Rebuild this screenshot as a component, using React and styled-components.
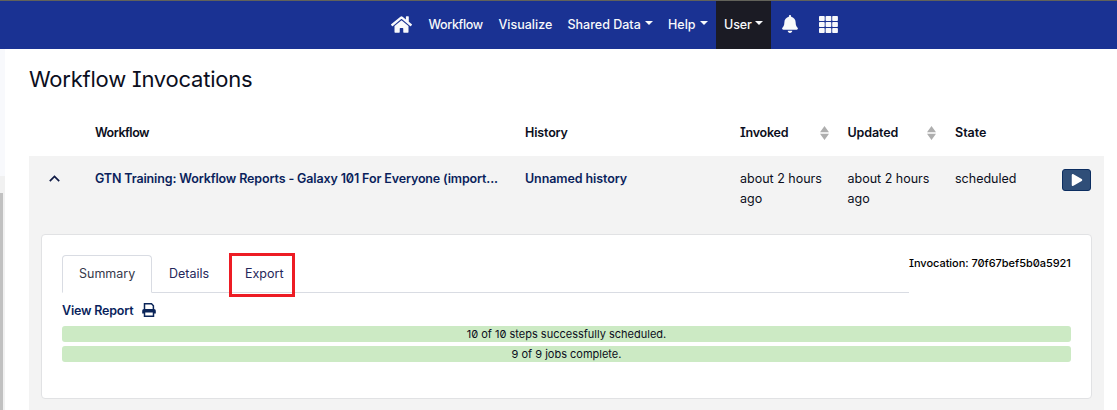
import React from "react";
import styled, { createGlobalStyle } from "styled-components";
import { FaHome, FaBell, FaPlay } from "react-icons/fa";

const GlobalStyle = createGlobalStyle`
  *, *::before, *::after { box-sizing: border-box; }
  body {
    margin: 0;
    background: #fff;
    color: #0b0e20;
    font: 400 12.5px/20px Inter, "Liberation Sans", sans-serif;
    font-feature-settings: "zero" 1, "cv08" 1;
    overflow: hidden;
  }
  a { color: inherit; text-decoration: none; }
`;

const Page = styled.div`
  display: flex;
  flex-direction: column;
  height: 410px;
`;

const Navbar = styled.nav`
  display: flex;
  height: 49px;
  padding-left: 391px;
  background: #1a3293;
  border-top: 1px solid #62625a;
  color: #f8f9fb;
`;

const NavItem = styled.a`
  display: flex;
  align-items: center;
  width: ${(p) => p.$width}px;
  padding: 0 0 ${(p) => (p.$icon ? 2 : 0)}px ${(p) => p.$pad || 0}px;
  background: ${(p) => (p.$active ? "#1b1b24" : "transparent")};
  font-weight: 500;
  white-space: nowrap;
  letter-spacing: ${(p) => p.$track || 0}px;
`;

const NavLabel = styled.span`
  width: ${(p) => p.$width}px;
`;

const Caret = styled.i`
  margin: -4px 0 0 4px;
  border: 4px solid transparent;
  border-top-color: currentColor;
  border-bottom: 0;
`;

const Body = styled.div`
  display: flex;
  flex: 1;
  min-height: 0;
`;

const SideStrip = styled.aside`
  display: flex;
  flex-direction: column;
  width: 5px;
  background: #f8f9fc;
`;

const Scrollbar = styled.div`
  flex: 1;
  margin-top: 127px;
  padding-top: 17px;
  background: #f1f1f1;
`;

const Thumb = styled.div`
  width: 3px;
  height: 100%;
  background: #c1c1c1;
`;

const Main = styled.main`
  display: flex;
  flex-direction: column;
  flex: 1;
  padding: 15px 13px 0 24px;
`;

const Title = styled.h1`
  margin: 0 0 29px;
  font-size: 22px;
  line-height: 30px;
  font-weight: 400;
  letter-spacing: -0.22px;
`;

const Row = styled.div`
  display: grid;
  grid-template-columns: 66px 430px 215px 107.5px 107.5px 107px 1fr;
`;

const HeadRow = styled(Row)`
  height: 33px;
  font-weight: 600;
`;

const Cell = styled.div`
  padding-right: 17px;
  letter-spacing: ${(p) => p.$track || 0}px;
`;

const SortCell = styled(Cell)`
  display: flex;
  justify-content: space-between;
  padding-right: 19px;
  svg { margin-top: 3px; }
`;

const Invocation = styled.section`
  flex: 1;
  padding: 13px 12px 0;
  background: #f3f3f3;
`;

const DataRow = styled(Row)`
  height: 65px;
  margin: 0 -12px;
`;

const ToggleCell = styled.div`
  padding: 6px 0 0 20px;
  svg { display: block; }
`;

const LinkCell = styled.a`
  color: #0a1f5c;
  font-weight: 600;
  white-space: nowrap;
  letter-spacing: ${(p) => p.$track || 0}px;
`;

const RunButton = styled.button`
  display: flex;
  align-items: center;
  justify-content: center;
  width: 29px;
  height: 22px;
  padding: 0;
  border: 1px solid #0b2d60;
  border-radius: 3px;
  background: #2f4e78;
  color: #fff;
`;

const Card = styled.div`
  height: 165px;
  padding: 20px;
  border: 1px solid #e1e2e4;
  border-radius: 4px;
  background: #fff;
`;

const CardTop = styled.div`
  display: flex;
  height: 38px;
`;

const Tabs = styled.div`
  display: flex;
  flex: 1;
  border-bottom: 1px solid #d9dce3;
`;

const Tab = styled.a`
  position: relative;
  width: ${(p) => p.$width}px;
  height: 38px;
  padding: 8px 0 0 ${(p) => p.$pad}px;
  border: 1px solid ${(p) => (p.$active ? "#d9dce3" : "transparent")};
  border-bottom-color: ${(p) => (p.$active ? "#fff" : "transparent")};
  border-radius: 4px 4px 0 0;
  color: ${(p) => (p.$active ? "#35394b" : "#25265a")};
`;

const Highlight = styled.span`
  position: absolute;
  inset: -3px auto auto -1px;
  width: 66px;
  height: 44px;
  border: 3px solid #ed1c24;
`;

const InvocationId = styled.div`
  width: 162px;
  font-size: 11px;
  line-height: 17px;
  font-weight: 500;
  white-space: nowrap;
  color: #000;
  letter-spacing: -0.04px;
`;

const ReportLink = styled.a`
  display: flex;
  align-items: center;
  height: 20px;
  margin: 7px 0 6px;
  color: #0a1f5c;
  font-weight: 600;
  letter-spacing: -0.2px;
`;

const ReportLabel = styled.span`
  width: 80px;
  padding-top: 1px;
`;

const Progress = styled.div`
  height: 16px;
  margin-bottom: 4px;
  border-radius: 3px;
  background: #cceac4;
  font-size: 11px;
  line-height: 16px;
  text-align: center;
`;

const SortIcon = () => (
  <svg width="9" height="14" viewBox="0 0 9 14" fill="#aeaeae">
    <path d="M4.5 0 9 6.2H0zM4.5 14 0 7.8h9z" />
  </svg>
);

const ChevronUp = () => (
  <svg width="11" height="7" viewBox="0 0 11 7" fill="none" stroke="#0f1a45" strokeWidth="1.7">
    <path d="M.8 6.2 5.5 1.5l4.7 4.7" />
  </svg>
);

const GridIcon = () => (
  <svg width="19" height="17" viewBox="0 0 19 17" fill="currentColor">
    {[0, 6, 12].map((y) =>
      [0, 6.6, 13.2].map((x) => (
        <rect key={`${x}-${y}`} x={x} y={y} width="5.7" height="5" rx="0.8" />
      ))
    )}
  </svg>
);

const PrintIcon = () => (
  <svg width="14" height="14" viewBox="0 0 14 14" fill="none" stroke="#0a2458" strokeWidth="1.5">
    <path d="M2.5 6.5V.8h7l1.9 1.9v3.8" />
    <path d="M2 6h10a1.8 1.8 0 0 1 1.8 1.8v2.7H.2V7.8A1.8 1.8 0 0 1 2 6z" fill="#0a2458" stroke="none" />
    <path d="M2.5 8.7h9v4.5h-9z" fill="#fff" />
  </svg>
);

export default function App() {
  return (
    <Page>
      <GlobalStyle />
      <Navbar>
        <NavItem $width={37.5} $icon><FaHome size={21} /></NavItem>
        <NavItem $width={70} $track={-0.35}>Workflow</NavItem>
        <NavItem $width={69}>Visualize</NavItem>
        <NavItem $width={100.5}><NavLabel $width={73}>Shared Data</NavLabel><Caret /></NavItem>
        <NavItem $width={48}><NavLabel $width={28}>Help</NavLabel><Caret /></NavItem>
        <NavItem $width={55} $pad={8} $track={-0.1} $active><NavLabel $width={27}>User</NavLabel><Caret /></NavItem>
        <NavItem $width={48} $pad={10} $icon><FaBell size={18} /></NavItem>
        <NavItem $width={19} $icon><GridIcon /></NavItem>
      </Navbar>
      <Body>
        <SideStrip>
          <Scrollbar><Thumb /></Scrollbar>
        </SideStrip>
        <Main>
          <Title>Workflow Invocations</Title>
          <HeadRow>
            <Cell />
            <Cell $track={-0.5}>Workflow</Cell>
            <Cell $track={-0.15}>History</Cell>
            <SortCell $track={-0.25}>Invoked<SortIcon /></SortCell>
            <SortCell $track={-0.1}>Updated<SortIcon /></SortCell>
            <Cell>State</Cell>
          </HeadRow>
          <Invocation>
            <DataRow>
              <ToggleCell><ChevronUp /></ToggleCell>
              <LinkCell $track={-0.14}>GTN Training: Workflow Reports - Galaxy 101 For Everyone (import...</LinkCell>
              <LinkCell $track={-0.1}>Unnamed history</LinkCell>
              <Cell>about 2 hours ago</Cell>
              <Cell>about 2 hours ago</Cell>
              <Cell>scheduled</Cell>
              <RunButton><FaPlay size={12} /></RunButton>
            </DataRow>
            <Card>
              <CardTop>
                <Tabs>
                  <Tab $width={90} $pad={16} $active>Summary</Tab>
                  <Tab $width={77} $pad={16}>Details</Tab>
                  <Tab $width={66} $pad={15}>Export<Highlight /></Tab>
                </Tabs>
                <InvocationId>Invocation: 70f67bef5b0a5921</InvocationId>
              </CardTop>
              <ReportLink><ReportLabel>View Report</ReportLabel><PrintIcon /></ReportLink>
              <Progress>10 of 10 steps successfully scheduled.</Progress>
              <Progress>9 of 9 jobs complete.</Progress>
            </Card>
          </Invocation>
        </Main>
      </Body>
    </Page>
  );
}
